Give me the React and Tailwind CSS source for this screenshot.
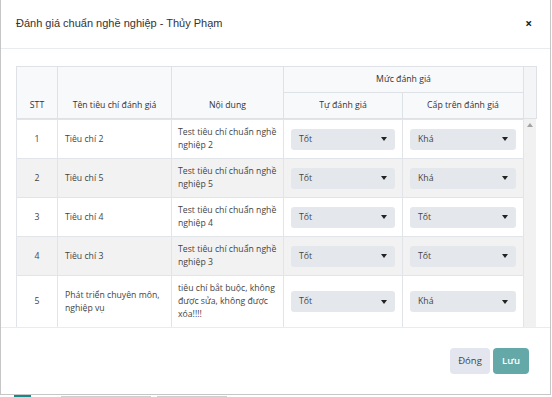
import React from 'react';

const rows = [
  { stt: 1, name: 'Tiêu chí 2', content: 'Test tiêu chí chuẩn nghề nghiệp 2', self: 'Tốt', boss: 'Khá' },
  { stt: 2, name: 'Tiêu chí 5', content: 'Test tiêu chí chuẩn nghề nghiệp 5', self: 'Tốt', boss: 'Khá' },
  { stt: 3, name: 'Tiêu chí 4', content: 'Test tiêu chí chuẩn nghề nghiệp 4', self: 'Tốt', boss: 'Tốt' },
  { stt: 4, name: 'Tiêu chí 3', content: 'Test tiêu chí chuẩn nghề nghiệp 3', self: 'Tốt', boss: 'Tốt' },
  { stt: 5, name: 'Phát triển chuyên môn, nghiệp vụ', content: 'tiêu chí bắt buộc, không được sửa, không được xóa!!!!', self: 'Tốt', boss: 'Khá' },
];

const SelectBox = ({ value }) => (
  <div className="h-[21px] rounded-[3px] bg-[#e4e7ec] flex items-center justify-between pl-[8px] pr-[8px] text-[#444]">
    <span>{value}</span>
    <svg width="6" height="4" viewBox="0 0 6 4">
      <path d="M0 0 L6 0 L3 4 Z" fill="#222" />
    </svg>
  </div>
);

const App = () => {
  const th = 'border border-[#dee2e6] px-[6px] py-[6px] font-medium text-[#333]';
  const td = 'border border-[#e1e4e8] px-[7px] py-[6px] align-middle';

  return (
    <div className="w-[552px] h-[397px] bg-white overflow-hidden flex flex-col" style={{ fontFamily: '"Open Sans", sans-serif' }}>
      <div className="w-[551px] h-[395px] border-l border-r border-b border-[#c6c6c6] flex flex-col shrink-0">
        {/* Header */}
        <div className="h-[49px] shrink-0 border-b border-[#e9ecef] flex items-center justify-between pl-[15px] pr-[18px]">
          <h2 className="text-[11px] text-[#333] pb-[2px]" style={{ fontFamily: '"Liberation Sans", Arial, sans-serif' }}>
            Đánh giá chuẩn nghề nghiệp - Thủy Phạm
          </h2>
          <span className="text-[12px] font-bold text-[#222] leading-none">×</span>
        </div>

        {/* Body */}
        <div className="pl-[15px] pt-[17px] shrink-0">
          <div className="w-[520px] text-[8.7px] leading-[13px] text-[#444]">
            <table className="w-[520px] table-fixed border-collapse bg-[#f8f9fb]">
              <colgroup>
                <col className="w-[41px]" />
                <col className="w-[114px]" />
                <col className="w-[112px]" />
                <col className="w-[119px]" />
                <col className="w-[121px]" />
                <col className="w-[13px]" />
              </colgroup>
              <thead>
                <tr>
                  <th rowSpan={2} className={`${th} align-bottom text-center`}>STT</th>
                  <th rowSpan={2} className={`${th} align-bottom text-center`}>Tên tiêu chí đánh giá</th>
                  <th rowSpan={2} className={`${th} align-bottom text-center`}>Nội dung</th>
                  <th colSpan={2} className={`${th} text-center`}>Mức đánh giá</th>
                  <th rowSpan={2} className="border border-[#dee2e6] bg-[#f4f5f7]"></th>
                </tr>
                <tr>
                  <th className={`${th} text-center`}>Tự đánh giá</th>
                  <th className={`${th} text-center`}>Cấp trên đánh giá</th>
                </tr>
              </thead>
            </table>

            <div className="flex h-[208px] overflow-hidden">
              <table className="w-[507px] table-fixed border-collapse self-start">
                <colgroup>
                  <col className="w-[41px]" />
                  <col className="w-[114px]" />
                  <col className="w-[112px]" />
                  <col className="w-[119px]" />
                  <col className="w-[121px]" />
                </colgroup>
                <tbody>
                  {rows.map((r, i) => (
                    <tr key={r.stt} className={i % 2 === 1 ? 'bg-[#f2f2f2]' : 'bg-white'}>
                      <td className={`${td} text-center`}>{r.stt}</td>
                      <td className={td}>{r.name}</td>
                      <td className={`${td} pl-[6px] pr-[3px]`}>{r.content}</td>
                      <td className={`${td} px-[6px]`}><SelectBox value={r.self} /></td>
                      <td className={`${td} px-[6px]`}><SelectBox value={r.boss} /></td>
                    </tr>
                  ))}
                </tbody>
              </table>
              <div className="w-[13px] h-[208px] bg-[#f1f1f1] flex justify-center pt-[4px]">
                <svg width="6" height="4" viewBox="0 0 6 4">
                  <path d="M3 0 L6 4 L0 4 Z" fill="#a3a3a3" />
                </svg>
              </div>
            </div>
          </div>
        </div>

        {/* Footer */}
        <div className="flex-1 border-t border-[#e9ecef] flex items-center justify-end gap-[3px] pr-[21px] text-[9.5px]">
          <button className="w-[40px] h-[26px] rounded-[4px] bg-[#e3e6ef] text-[#444]">Đóng</button>
          <button className="w-[36px] h-[26px] rounded-[4px] bg-[#64a8a8] text-white font-semibold">Lưu</button>
        </div>
      </div>

      {/* page behind the modal */}
      <div className="h-[2px] flex items-start gap-[6px] overflow-hidden">
        <div className="ml-[14px] w-[17px] h-[2px] bg-[#138a8a]"></div>
        <div className="ml-[24px] w-[90px] h-[1px] mt-[1px] bg-[#d0d0d0]"></div>
        <div className="w-[70px] h-[1px] mt-[1px] bg-[#d0d0d0]"></div>
      </div>
    </div>
  );
};

export default App;
